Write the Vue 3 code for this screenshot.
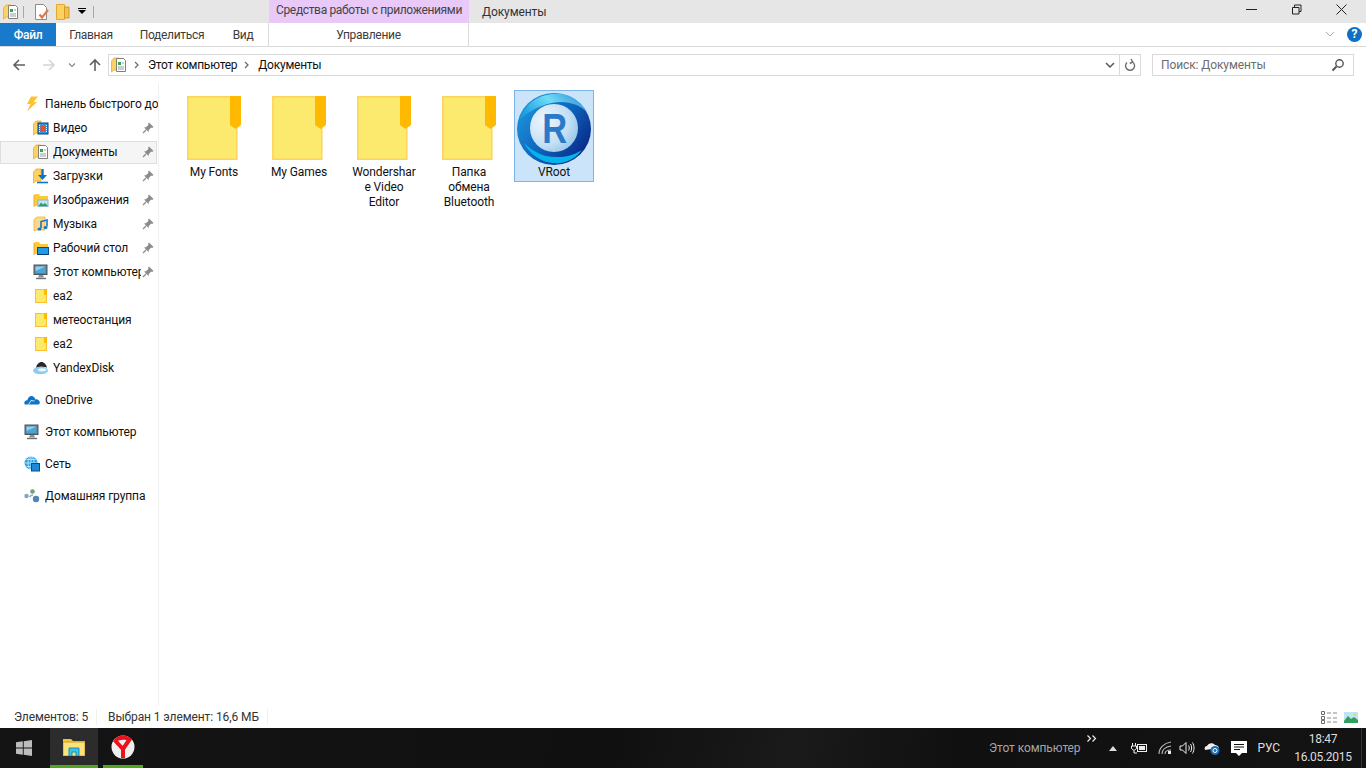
<script setup>
const navGroups = [
  [
    { label: 'Панель быстрого доступа', icon: 'bolt', top: true },
    { label: 'Видео', icon: 'lib-video', pin: true },
    { label: 'Документы', icon: 'lib-docs', pin: true, active: true },
    { label: 'Загрузки', icon: 'lib-down', pin: true },
    { label: 'Изображения', icon: 'lib-pics', pin: true },
    { label: 'Музыка', icon: 'lib-music', pin: true },
    { label: 'Рабочий стол', icon: 'lib-desk', pin: true },
    { label: 'Этот компьютер', icon: 'pc', pin: true },
    { label: 'ea2', icon: 'small-folder' },
    { label: 'метеостанция', icon: 'small-folder' },
    { label: 'ea2', icon: 'small-folder' },
    { label: 'YandexDisk', icon: 'ydisk' },
  ],
  [{ label: 'OneDrive', icon: 'onedrive', top: true }],
  [{ label: 'Этот компьютер', icon: 'pc', top: true }],
  [{ label: 'Сеть', icon: 'net', top: true }],
  [{ label: 'Домашняя группа', icon: 'home', top: true }],
]

const folders = [
  ['My Fonts'],
  ['My Games'],
  ['Wondershar', 'e Video', 'Editor'],
  ['Папка', 'обмена', 'Bluetooth'],
]
</script>

<template>
  <div class="window">
    <svg class="defs" width="0" height="0">
      <defs>
        <symbol id="folder-back" viewBox="0 0 16 16">
          <path d="M.5 4 3 1h5v12H3l-2.500 2z" fill="#fdd262" stroke="#e9ad2c" stroke-width=".8" />
        </symbol>
        <symbol id="doc" viewBox="0 0 16 16">
          <use href="#folder-back" />
          <path d="M5.500 1.500h7l2 2v11h-9z" fill="#fff" stroke="#7f7f7f" />
          <rect x="7" y="5" width="3" height="3" fill="#2fa84a" />
          <path d="M7 10h6M7 12h6M11 6h2" stroke="#9a9a9a" />
        </symbol>
        <symbol id="lib-docs" viewBox="0 0 16 16"><use href="#doc" /></symbol>
        <symbol id="lib-video" viewBox="0 0 16 16">
          <use href="#folder-back" />
          <rect x="5" y="3" width="10" height="11" fill="#2a9be0" stroke="#0b3c78" />
          <rect x="7.500" y="5.500" width="5" height="6" fill="#e84d3c" />
          <path d="M6.500 5v7M13.500 5v7" stroke="#fff" stroke-dasharray="1 1" />
        </symbol>
        <symbol id="lib-down" viewBox="0 0 16 16">
          <use href="#folder-back" />
          <path d="M9.500 1v8" stroke="#0b74d1" stroke-width="2.400" />
          <path d="M5 7h9l-4.500 5z" fill="#0b74d1" />
          <path d="M4 14.500h11" stroke="#0b74d1" stroke-width="1.600" />
        </symbol>
        <symbol id="lib-pics" viewBox="0 0 16 16">
          <path d="M1 14V3l1-1h4l1 2h8v4H5v6z" fill="#fdc93c" />
          <path d="M1 3v12" stroke="#e9ad2c" />
          <rect x="5" y="8" width="10" height="6.500" fill="#bfe6f7" stroke="#8cb4c8" />
          <path d="M5.500 14 8 10.500l2 2 2-1.500 3 3z" fill="#2f9f5a" />
        </symbol>
        <symbol id="lib-music" viewBox="0 0 16 16">
          <path d="M1 15V3.500L4 1h8v13H3z" fill="#fdd88a" stroke="#eeb43e" stroke-width=".8" />
          <path d="M8 12V5.500l6-1.500v6.500" fill="none" stroke="#1277c9" stroke-width="1.600" />
          <ellipse cx="6.500" cy="13" rx="2" ry="1.600" fill="#1277c9" />
          <ellipse cx="12.500" cy="11.500" rx="2" ry="1.600" fill="#1277c9" />
        </symbol>
        <symbol id="lib-desk" viewBox="0 0 16 16">
          <path d="M1 14V3l1-1h4l1 2h8v4H5v6z" fill="#fdc93c" />
          <path d="M1 3v12" stroke="#e9ad2c" />
          <rect x="4.500" y="7.500" width="11" height="7" fill="#1e9be8" stroke="#0b4c8c" />
          <path d="M5 14.500h10" stroke="#0b3c78" />
        </symbol>
        <symbol id="pc" viewBox="0 0 16 16">
          <rect x="1" y="1" width="13" height="9.500" fill="#6e7880" stroke="#4e565c" />
          <rect x="2.500" y="2.500" width="10" height="6.500" fill="#4aa4d6" />
          <path d="M2.500 2.500h10L2.500 7z" fill="#8fd0ee" />
          <path d="M6 11h4l1 2.500H5z" fill="#8a9096" />
          <path d="M3 14.500h10" stroke="#6a7076" stroke-width="1.400" />
        </symbol>
        <symbol id="small-folder" viewBox="0 0 16 16">
          <rect x="2.500" y="1.500" width="11" height="13" fill="#fbe96e" stroke="#fdc02f" />
          <path d="M11 1h3v6h-3z" fill="#ffb900" />
        </symbol>
        <symbol id="ydisk" viewBox="0 0 16 16">
          <path d="M3 8c.6-3.500 3-6 5.500-6S13.500 4.500 14 7.500C11 6.500 6 6.500 3 8z" fill="#24272b" />
          <ellipse cx="7.500" cy="10.500" rx="7.500" ry="3.800" fill="#8fcbef" />
          <ellipse cx="9" cy="9.800" rx="4.200" ry="1.600" fill="#eef8fd" />
        </symbol>
        <symbol id="onedrive" viewBox="0 0 16 16">
          <path d="M.8 12.500c-1.300-2 .2-4.500 2.500-4.300C4 5 6.500 3.200 8.700 4.300 10.200 5 11 6 11.400 7.400c2.100-.5 4.400 1 4.400 3.100 0 1-.5 2-1.500 2z" fill="#0f73c6" />
          <path d="M4.500 12.500 7 8.500l3.500.5" fill="none" stroke="#fff" stroke-width=".8" />
        </symbol>
        <symbol id="net" viewBox="0 0 16 16">
          <circle cx="7" cy="7" r="6.500" fill="#2ea2e6" />
          <path d="M1 7h12M7 .5v13M2.500 3.500h9M2.500 10.500h9" stroke="#c8ecfb" stroke-width=".8" />
          <ellipse cx="7" cy="7" rx="3" ry="6.500" fill="none" stroke="#c8ecfb" stroke-width=".8" />
          <rect x="7.500" y="7.500" width="8" height="7.500" fill="#1e8ad6" stroke="#0b4c8c" />
        </symbol>
        <symbol id="home" viewBox="0 0 16 16">
          <circle cx="2.500" cy="8" r="2.200" fill="#7ea6cc" />
          <circle cx="8.500" cy="3.500" r="2.300" fill="#6fa36b" />
          <circle cx="12" cy="11" r="3.200" fill="#4f86b8" />
          <path d="M5.500 9c1-1.500 2-2 3.500-2" stroke="#8fb0c9" stroke-width="1.600" fill="none" />
        </symbol>
        <symbol id="bolt" viewBox="0 0 16 16">
          <path d="M7 .5h7L9.500 6H13L3 15.500 6.500 8H3z" fill="#fdc22e" />
        </symbol>
        <symbol id="pin" viewBox="0 0 12 12">
          <path d="M7 .5 11.500 5 10 6 9 5.500 6.800 8.200 6.600 10 2 5.400 3.800 5.200 6.500 3 6 2z" fill="#8b8b8b" />
          <path d="M4 8 1 11" stroke="#8b8b8b" stroke-width="1.300" />
        </symbol>
      </defs>
    </svg>

    <div class="titlebar">
      <div class="quick">
        <svg class="i16"><use href="#doc" /></svg>
        <span class="qsep sep1"></span>
        <svg class="i16 qnote" viewBox="0 0 16 16">
          <path d="M1.500.5h8l3 3v12h-11z" fill="#fff" stroke="#8c8c8c" />
          <path d="m5.500 10.500 2.500 3 6-7.500" fill="none" stroke="#dc7a4a" stroke-width="2.200" />
        </svg>
        <svg class="i16 qfold" viewBox="0 0 16 16">
          <path d="M.5.500h8v15h-8z" fill="#fdd262" stroke="#e2a92e" />
          <path d="M8.500 3h4.500v11H8.500z" fill="#f3c04a" stroke="#d39b26" />
        </svg>
        <svg class="qdrop" viewBox="0 0 8 7"><path d="M0 .5h8" stroke="#000" /><path d="M0 2h8L4 6z" /></svg>
        <span class="qsep sep2"></span>
      </div>
      <div class="ctx-title">Средства работы с приложениями</div>
      <div class="doc-title">Документы</div>
      <div class="winbtns">
        <svg viewBox="0 0 11 11" class="wb"><path d="M0 5.500h11" stroke="#222" /></svg>
        <svg viewBox="0 0 11 11" class="wb"><path d="M1.500 3.500h6.500v6.500H1.500zM3.500 3.500v-2.500h6.500v6.500H8" fill="none" stroke="#222" /></svg>
        <svg viewBox="0 0 11 11" class="wb"><path d="m.5.500 10 10M10.500.500l-10 10" stroke="#222" /></svg>
      </div>
    </div>

    <div class="tabs">
      <div class="tab file">Файл</div>
      <div class="tab t-home">Главная</div>
      <div class="tab t-share">Поделиться</div>
      <div class="tab t-view">Вид</div>
      <div class="tab t-manage">Управление</div>
      <svg class="ribbon-chev" viewBox="0 0 10 6"><path d="m1 1 4 4 4-4" fill="none" stroke="#a8a8a8" /></svg>
      <div class="help">?</div>
    </div>

    <div class="addrrow">
      <svg class="nv nv-back" viewBox="0 0 14 14"><path d="M13 7H2M7 2 2 7l5 5" fill="none" stroke="#5f5f5f" stroke-width="1.600" /></svg>
      <svg class="nv nv-fwd" viewBox="0 0 14 14"><path d="M1 7h11M7 2l5 5-5 5" fill="none" stroke="#d4d4d4" stroke-width="1.600" /></svg>
      <svg class="nv-drop" viewBox="0 0 8 5"><path d="m1 .5 3 3 3-3" fill="none" stroke="#8a8a8a" stroke-width="1.200" /></svg>
      <svg class="nv nv-up" viewBox="0 0 14 14"><path d="M7 13V2M2 7l5-5 5 5" fill="none" stroke="#5f5f5f" stroke-width="1.600" /></svg>
      <div class="addr">
        <svg class="i16"><use href="#doc" /></svg>
        <svg class="crumb" viewBox="0 0 5 8"><path d="m1 1 3 3-3 3" fill="none" stroke="#6e6e6e" stroke-width="1.300" /></svg>
        <span class="crumb-text">Этот компьютер</span>
        <svg class="crumb" viewBox="0 0 5 8"><path d="m1 1 3 3-3 3" fill="none" stroke="#6e6e6e" stroke-width="1.300" /></svg>
        <span class="crumb-text">Документы</span>
        <svg class="addr-drop" viewBox="0 0 10 6"><path d="m1 1 4 4 4-4" fill="none" stroke="#5a5a5a" stroke-width="1.500" /></svg>
        <div class="refresh">
          <svg viewBox="0 0 12 14" width="12" height="14"><path d="M3 4.500a4.500 4.500 0 1 0 5.500-.5M7 1l1.800 3L5.800 5.500" fill="none" stroke="#6e6e6e" stroke-width="1.400" /></svg>
        </div>
      </div>
      <div class="search">
        <span>Поиск: Документы</span>
        <svg viewBox="0 0 14 14" width="14" height="14"><circle cx="8.500" cy="5.500" r="3.700" fill="none" stroke="#555" stroke-width="1.400" /><path d="M5.500 8.500 1.500 12.500" stroke="#555" stroke-width="2" /></svg>
      </div>
    </div>

    <div class="main">
      <nav class="nav">
        <div v-for="(group, g) in navGroups" :key="g" class="nav-group">
          <div
            v-for="item in group"
            :key="item.icon + item.label"
            class="nav-row"
            :class="{ top: item.top, active: item.active }"
          >
            <svg class="i16"><use :href="'#' + item.icon" /></svg>
            <span class="nav-label">{{ item.label }}</span>
            <svg v-if="item.pin" class="pin"><use href="#pin" /></svg>
          </div>
        </div>
      </nav>

      <section class="files">
        <div v-for="f in folders" :key="f[0]" class="file-item">
          <svg class="folder" viewBox="0 0 54 64">
            <path d="M.8.800h49v62.400H.8z" fill="#fbea6e" stroke="#fdd45a" stroke-width="1.500" />
            <path d="M43 0h11v29l-5.500 4L43 29z" fill="#ffb900" />
          </svg>
          <div v-for="line in f" :key="line" class="file-line">{{ line }}</div>
        </div>
        <div class="file-item selected">
          <svg class="vroot" viewBox="0 0 74 72">
            <defs>
              <linearGradient id="vr-outer" x1="0.1" y1="0.2" x2="0.9" y2="0.8">
                <stop offset="0" stop-color="#1d8fd8" />
                <stop offset=".5" stop-color="#0e66bd" />
                <stop offset="1" stop-color="#0a2c8c" />
              </linearGradient>
              <linearGradient id="vr-top" x1="0" y1="0.6" x2="1" y2="0.2">
                <stop offset="0" stop-color="#1c9fe0" />
                <stop offset=".5" stop-color="#6fdcf5" />
                <stop offset="1" stop-color="#2f8fd8" />
              </linearGradient>
              <radialGradient id="vr-inner" cx=".3" cy=".35" r=".85">
                <stop offset="0" stop-color="#eef6fc" />
                <stop offset=".6" stop-color="#c4dff4" />
                <stop offset="1" stop-color="#86bde8" />
              </radialGradient>
            </defs>
            <ellipse cx="37" cy="36" rx="37" ry="36" fill="url(#vr-outer)" />
            <path d="M3 26C9 8 26-1 44 1c11 1 20 8 26 18C58 7 32 2 3 26z" fill="url(#vr-top)" />
            <path d="M7 50c6 12 20 22 36 20 9-1 17-6 22-13-12 8-25 8-36 6C21 61 13 56 7 50z" fill="#06b2ec" />
            <circle cx="37" cy="35" r="24" fill="url(#vr-inner)" />
            <text x="46" y="50" text-anchor="middle" class="vroot-r" transform="scale(.82 1)">R</text>
          </svg>
          <div class="file-line vr-label">VRoot</div>
        </div>
      </section>
    </div>

    <div class="status">
      <span class="st-count">Элементов: 5</span>
      <span class="st-sel">Выбран 1 элемент: 16,6 МБ</span>
      <div class="st-right">
        <svg viewBox="0 0 16 13" width="16" height="13">
          <path d="M.5.500h3v3h-3zM.5 5.500h3v3h-3zM.5 9.500h3v3h-3z" fill="none" stroke="#6e6e6e" />
          <path d="M6 2h4M12 2h4M6 7h4M12 7h4M6 11h4M12 11h4" stroke="#8a8a8a" />
        </svg>
        <svg viewBox="0 0 14 11" width="14" height="11">
          <rect width="14" height="11" fill="#bfe6f7" />
          <path d="M0 9 4 4l3 3 3-2 4 3v3H0z" fill="#2f9f5a" />
          <circle cx="11" cy="2.500" r="1.300" fill="#f2d44a" />
        </svg>
      </div>
    </div>

    <footer class="taskbar">
      <svg class="start" viewBox="0 0 16 16">
        <path d="M0 2.300 6.800 1.300v6.200H0zM7.700 1.200 16 0v7.500H7.700zM0 8.500h6.800v6.200L0 13.700zM7.700 8.500H16V16l-8.300-1.200z" fill="#bdbdbd" />
      </svg>
      <div class="tb-btn tb-explorer">
        <svg viewBox="0 0 22 18" width="22" height="18">
          <path d="M0 1h8l2 2h12v15H0z" fill="#f0c33c" />
          <rect y="4" width="22" height="14" fill="#fbe27a" stroke="#d09e24" />
          <path d="M6 18v-8h10v8h-3v-4H9v4z" fill="#3bc4e8" stroke="#1c8fb8" />
        </svg>
      </div>
      <div class="tb-btn tb-yandex">
        <svg viewBox="0 0 24 24" width="24" height="24">
          <circle cx="12" cy="12" r="11.500" fill="#efefef" />
          <path d="M2 7C4 2.500 8 .5 12 .5c3 0 6 1 8 3l-2 3C15 4 9 4 5 7z" fill="#e8141c" />
          <path d="M4.500 6 12 14l7.500-11M12 13v10" fill="none" stroke="#e8141c" stroke-width="4" />
        </svg>
      </div>
      <div class="tray">
        <span class="tb-pc">Этот компьютер</span>
        <svg class="tr-more" viewBox="0 0 10 7" width="10" height="7"><path d="m.5.500 3 3-3 3M5.500.500l3 3-3 3" fill="none" stroke="#eee" stroke-width="1.200" /></svg>
        <svg class="tr-up" viewBox="0 0 8 5" width="8" height="5"><path d="M4 0 8 5H0z" fill="#ddd" /></svg>
        <svg class="tr-power" viewBox="0 0 17 12" width="17" height="12">
          <path d="M1.500 1v3M4.500 1v3M.5 4h5v2.500L3 8.500.5 6.500zM3 8.500V11h3" fill="none" stroke="#eee" />
          <rect x="6.500" y="2.500" width="9" height="7" fill="none" stroke="#eee" />
          <rect x="8" y="4" width="6" height="4" fill="#eee" />
        </svg>
        <svg class="tr-wifi" viewBox="0 0 14 14" width="14" height="14">
          <path d="M1 13C1 7 6 2 13 1M4 13c0-4 3-7 9-8M7 13c0-2 2-4 6-4" fill="none" stroke="#bbb" stroke-width="1.100" />
          <rect x="10" y="10" width="3" height="3" fill="#eee" />
        </svg>
        <svg class="tr-sound" viewBox="0 0 16 14" width="16" height="14">
          <path d="M1 5h2.500L7 1.500v11L3.500 9H1z" fill="none" stroke="#eee" />
          <path d="M9.500 4.500c1 1.500 1 3.500 0 5M11.500 3c1.500 2 1.500 6 0 8M13.500 1.500c2 3 2 8 0 11" fill="none" stroke="#eee" />
        </svg>
        <svg class="tr-cloud" viewBox="0 0 16 14" width="16" height="14">
          <path d="M1 9C0 7 1 5 3 5c1-3 6-4 8-1 2 0 4 1 4 4H8z" fill="#eee" />
          <circle cx="11" cy="9.500" r="4.500" fill="#1b6fb8" />
          <circle cx="11" cy="9.500" r="2" fill="none" stroke="#fff" />
        </svg>
        <svg class="tr-note" viewBox="0 0 16 15" width="16" height="15">
          <path d="M0 0h16v12h-5l-3 3-3-3H0z" fill="#fff" />
          <path d="M3 3.500h10M3 6h10M3 8.500h6" stroke="#111" />
        </svg>
        <span class="tr-lang">РУС</span>
        <div class="clock">
          <div>18:47</div>
          <div>16.05.2015</div>
        </div>
        <div class="show-desk"></div>
      </div>
    </footer>
  </div>
</template>

<style scoped>
.window {
  width: 1366px;
  height: 768px;
  display: flex;
  flex-direction: column;
  overflow: hidden;
  background: #fff;
  font-family: Roboto, "Noto Sans", sans-serif;
  font-size: 12px;
  letter-spacing: -0.1px;
  color: #1a1a1a;
}
.defs {
  position: absolute;
}
.i16 {
  width: 16px;
  height: 16px;
  flex: none;
}

.titlebar {
  height: 23px;
  background: #e6e6e6;
  display: flex;
  flex: none;
}
.quick {
  width: 269px;
  box-sizing: border-box;
  display: flex;
  align-items: center;
  padding-left: 3px;
}
.qsep {
  width: 1px;
  height: 12px;
  background: #a8a8a8;
}
.sep1 {
  margin-left: 4px;
}
.qnote {
  margin-left: 10px;
}
.qfold {
  margin-left: 6px;
}
.qdrop {
  width: 8px;
  height: 7px;
  margin-left: 6px;
}
.sep2 {
  margin-left: 7px;
}
.ctx-title {
  width: 200px;
  background: #e8c9f8;
  text-align: center;
  line-height: 21px;
  color: #444;
  white-space: nowrap;
  letter-spacing: -0.35px;
}
.doc-title {
  margin-left: 13px;
  line-height: 25px;
  color: #333;
}
.winbtns {
  margin-left: auto;
  display: flex;
  gap: 34px;
  padding: 4px 19px 0 0;
}
.wb {
  width: 11px;
  height: 11px;
}

.tabs {
  height: 24px;
  flex: none;
  display: flex;
  align-items: flex-start;
  border-bottom: 1px solid #dadada;
  box-sizing: border-box;
}
.tab {
  height: 23px;
  text-align: center;
  line-height: 25px;
  color: #3c3c3c;
  letter-spacing: -0.3px;
}
.file {
  width: 56px;
  background: #1979ca;
  color: #fff;
  font-weight: 500;
}
.t-home {
  width: 70px;
}
.t-share {
  width: 92px;
}
.t-view {
  width: 50px;
}
.t-manage {
  width: 201px;
  margin-left: 0;
  border-left: 1px solid #dadada;
  border-right: 1px solid #dadada;
  box-sizing: border-box;
}
.ribbon-chev {
  width: 10px;
  height: 6px;
  margin: 8px 0 0 auto;
}
.help {
  width: 15px;
  height: 15px;
  margin: 4px 4px 0 12px;
  border-radius: 50%;
  background: #0f6fc6;
  color: #fff;
  font-weight: 700;
  font-size: 12px;
  line-height: 15px;
  text-align: center;
}

.addrrow {
  height: 36px;
  flex: none;
  display: flex;
  align-items: center;
  padding: 0 12px 0 12px;
  box-sizing: border-box;
}
.nv {
  width: 14px;
  height: 14px;
  flex: none;
}
.nv-fwd {
  margin-left: 16px;
}
.nv-drop {
  width: 8px;
  height: 5px;
  margin-left: 12px;
}
.nv-up {
  margin-left: 12px;
}
.addr {
  margin-left: 6px;
  width: 1033px;
  height: 22px;
  box-sizing: border-box;
  border: 1px solid #d9d9d9;
  display: flex;
  align-items: center;
  padding-left: 2px;
  flex: none;
}
.crumb {
  width: 5px;
  height: 8px;
  margin: 0 9px 0 7px;
  flex: none;
}
.crumb-text {
  color: #111;
  letter-spacing: -0.25px;
}
.addr-drop {
  width: 10px;
  height: 6px;
  margin-left: auto;
  margin-right: 4px;
}
.refresh {
  width: 20px;
  height: 100%;
  border-left: 1px solid #d9d9d9;
  display: flex;
  align-items: center;
  justify-content: center;
}
.search {
  margin-left: 11px;
  width: 202px;
  height: 22px;
  box-sizing: border-box;
  border: 1px solid #d9d9d9;
  display: flex;
  align-items: center;
  justify-content: space-between;
  padding: 0 8px;
  color: #6d6d6d;
  flex: none;
}

.main {
  flex: 1;
  display: flex;
  min-height: 0;
}
.nav {
  width: 159px;
  flex: none;
  box-sizing: border-box;
  border-right: 1px solid #f0f0f0;
  padding-top: 9px;
  display: flex;
  flex-direction: column;
  gap: 8px;
}
.nav-row {
  position: relative;
  height: 24px;
  display: flex;
  align-items: center;
  padding-left: 33px;
  box-sizing: border-box;
  overflow: hidden;
}
.nav-row.top {
  padding-left: 24px;
}
.nav-row.active::before {
  content: "";
  position: absolute;
  left: 0;
  right: 1px;
  top: 1px;
  bottom: 0;
  background: #f5f5f5;
  border: 1px solid #dedede;
}
.nav-row .i16,
.nav-label,
.pin {
  position: relative;
}
.nav-label {
  margin-left: 4px;
  white-space: nowrap;
  overflow: hidden;
  flex: 1;
  color: #111;
}
.nav-row.top .nav-label {
  margin-left: 5px;
}
.pin {
  width: 12px;
  height: 12px;
  flex: none;
  margin: 0 4px 0 1px;
}

.files {
  flex: 1;
  display: flex;
  align-items: flex-start;
  gap: 5px;
  padding: 7px 0 0 15px;
}
.file-item {
  width: 80px;
  box-sizing: border-box;
  display: flex;
  flex-direction: column;
  align-items: center;
  text-align: center;
  line-height: 15px;
  color: #111;
}
.folder {
  width: 54px;
  height: 64px;
  margin: 6px 0 5px 0;
}
.file-line {
  white-space: nowrap;
}
.selected {
  height: 92px;
  background: #cce4fa;
  border: 1px solid #7db5ea;
}
.vroot {
  width: 74px;
  height: 72px;
  margin-top: 2px;
  flex: none;
}
.vroot-r {
  font-family: "Liberation Sans", sans-serif;
  font-weight: 700;
  font-size: 42px;
  fill: #2a7ac9;
}
.vr-label {
  margin-top: 0;
}

.status {
  height: 22px;
  flex: none;
  display: flex;
  align-items: center;
  padding: 0 8px 0 14px;
  color: #333;
}
.st-count {
  width: 82px;
  border-right: 1px solid #f0f0f0;
  line-height: 16px;
}
.st-sel {
  margin-left: 11px;
  width: 159px;
  border-right: 1px solid #f0f0f0;
  line-height: 16px;
}
.st-right {
  margin-left: auto;
  display: flex;
  align-items: center;
  gap: 7px;
}

.taskbar {
  height: 40px;
  flex: none;
  display: flex;
  align-items: stretch;
  background: linear-gradient(100deg, #141414 0%, #101010 45%, #1a1a1a 58%, #101010 70%, #131313 100%);
  color: #ddd;
  font-size: 12px;
}
.start {
  width: 16px;
  height: 16px;
  align-self: center;
  margin: 0 18px 0 16px;
}
.tb-btn {
  display: flex;
  align-items: center;
  justify-content: center;
  box-sizing: border-box;
  border-bottom: 3px solid #4fa81c;
}
.tb-explorer {
  width: 48px;
  background: #2c2c2c;
}
.tb-yandex {
  width: 40px;
  margin-left: 5px;
}
.tray {
  margin-left: auto;
  display: flex;
  align-items: center;
}
.tb-pc {
  color: #a6a6a6;
}
.tr-more {
  margin: -20px 0 0 6px;
}
.tr-up {
  margin-left: 12px;
}
.tr-power {
  margin-left: 14px;
}
.tr-wifi {
  margin-left: 10px;
}
.tr-sound {
  margin-left: 7px;
}
.tr-cloud {
  margin-left: 9px;
}
.tr-note {
  margin-left: 11px;
}
.tr-lang {
  margin-left: 11px;
  color: #ddd;
}
.clock {
  width: 66px;
  margin-left: 10px;
  text-align: center;
  line-height: 18px;
  color: #ddd;
  letter-spacing: -0.3px;
}
.show-desk {
  width: 1px;
  height: 100%;
  margin: 0 4px 0 5px;
  background: #333;
}
</style>
